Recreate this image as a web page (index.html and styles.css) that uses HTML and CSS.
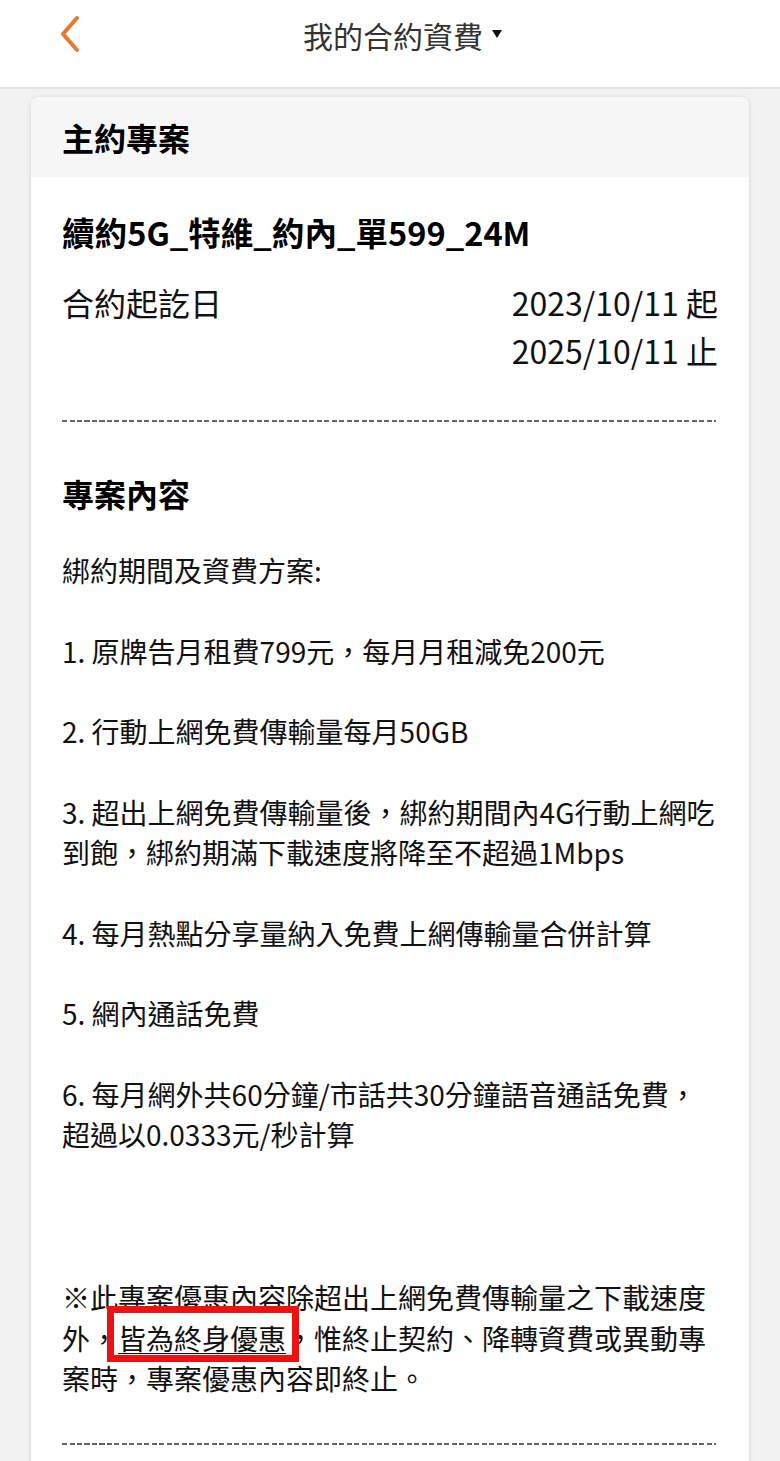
FILE: index.html
```html
<!DOCTYPE html>
<html lang="zh-Hant">
<head>
<meta charset="utf-8">
<title>我的合約資費</title>
<link rel="stylesheet" href="styles.css">
</head>
<body>
<header class="topbar">
  <svg class="back" width="24" height="40" viewBox="0 0 24 40" aria-hidden="true">
    <path d="M19 4 L5 20 L19 36" fill="none" stroke="#e8772f" stroke-width="4" stroke-linecap="round" stroke-linejoin="round"/>
  </svg>
  <div class="title">我的合約資費<span class="caret"></span></div>
</header>
<main class="page">
  <section class="card">
    <div class="card-head">主約專案</div>
    <div class="card-body">
      <div class="plan-name">續約5G_特維_約內_單599_24M</div>
      <div class="period">
        <div class="period-label">合約起訖日</div>
        <div class="period-dates">2023/10/11 起<br>2025/10/11 止</div>
      </div>
      <div class="dash"></div>
      <div class="section-title">專案內容</div>
      <div class="content">
        <p>綁約期間及資費方案:</p>
        <p>1. 原牌告月租費799元，每月月租減免200元</p>
        <p>2. 行動上網免費傳輸量每月50GB</p>
        <p>3. 超出上網免費傳輸量後，綁約期間內4G行動上網吃到飽，綁約期滿下載速度將降至不超過1Mbps</p>
        <p>4. 每月熱點分享量納入免費上網傳輸量合併計算</p>
        <p>5. 網內通話免費</p>
        <p>6. 每月網外共60分鐘/市話共30分鐘語音通話免費，超過以0.0333元/秒計算</p>
        <p class="note">※此專案優惠內容除超出上網免費傳輸量之下載速度外，<span class="mark">皆為終身優惠</span>，惟終止契約、降轉資費或異動專案時，專案優惠內容即終止。</p>
      </div>
      <div class="dash dash-bottom"></div>
    </div>
  </section>
</main>
</body>
</html>
```

FILE: styles.css
```css
* { box-sizing: border-box; }
html, body { margin: 0; padding: 0; }
body {
  background: #f2f2f2;
  font-family: "Noto Sans CJK TC", "Noto Sans", sans-serif;
  color: #111;
  height: 1461px;
  overflow: hidden;
}
.topbar {
  position: relative;
  height: 89px;
  background: #fff;
  border-bottom: 2px solid #e4e4e4;
  display: flex;
  align-items: center;
  justify-content: center;
}
.back {
  position: absolute;
  left: 58px;
  top: 14px;
}
.title {
  position: relative;
  font-size: 30px;
  line-height: 40px;
  color: #333;
  margin-top: -18px;
  margin-left: 6px;
}
.caret {
  position: absolute;
  right: -19px;
  top: 15px;
  width: 0;
  height: 0;
  border-left: 5px solid transparent;
  border-right: 5px solid transparent;
  border-top: 8px solid #111;
}
.page {
  padding: 8px 31px 0;
}
.card {
  background: #fff;
  border-radius: 8px;
  box-shadow: 0 1px 5px rgba(0,0,0,0.13);
  overflow: hidden;
}
.card-head {
  background: #f6f6f6;
  height: 80px;
  line-height: 80px;
  padding-left: 31px;
  font-size: 32px;
  font-weight: 700;
  color: #000;
}
.card-body {
  padding: 31px 31px 40px;
}
.plan-name {
  font-size: 32.6px;
  font-weight: 700;
  line-height: 48px;
  color: #000;
}
.period {
  display: flex;
  justify-content: space-between;
  margin-top: 22px;
  font-size: 32px;
  line-height: 48px;
  color: #111;
}
.period-dates {
  text-align: right;
}
.dash {
  height: 2px;
  margin: 46px 2px 0 0;
  background: repeating-linear-gradient(to right, #666 0 5px, transparent 5px 7.5px);
}
.section-title {
  margin-top: 47px;
  font-size: 32px;
  font-weight: 700;
  line-height: 48px;
  color: #000;
}
.content {
  margin-top: 33px;
  font-size: 28px;
  line-height: 40.3px;
}
.content p {
  margin: 0 0 40.3px;
}
.content p.note {
  margin-top: 123px;
  margin-bottom: 0;
}
.mark {
  position: relative;
  text-decoration: underline;
  text-underline-offset: 3px;
  text-decoration-thickness: 1px;
}
.mark::after {
  content: "";
  position: absolute;
  left: -11px;
  right: -13px;
  top: -12px;
  bottom: -4px;
  border: 7px solid #ee1111;
}
.dash-bottom {
  margin-top: 45px;
}
```
